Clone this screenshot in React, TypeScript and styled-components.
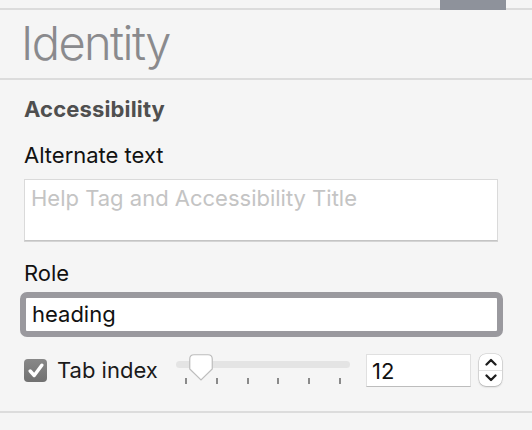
import React from "react";
import styled, { createGlobalStyle } from "styled-components";

const GlobalStyle = createGlobalStyle`
  html, body {
    margin: 0;
    padding: 0;
    background: #f5f5f5;
    font-family: Inter, "Noto Sans", "Liberation Sans", sans-serif;
  }
`;

const Panel = styled.div`
  width: 532px;
  height: 430px;
  background: #f5f5f5;
  overflow: hidden;
`;

const TopStrip = styled.div`
  height: 8px;
  display: flex;
  justify-content: flex-end;
  padding-right: 26px;
  border-bottom: 2px solid #dcdcdc;
`;

const ActiveTab = styled.div`
  width: 66px;
  height: 10px;
  background: #8e929b;
`;

const Header = styled.div`
  height: 61px;
  padding: 5px 0 2px 21px;
  border-bottom: 2px solid #dcdcdc;
`;

const Title = styled.h1`
  margin: 0;
  font-size: 47px;
  line-height: 56px;
  font-weight: 300;
  letter-spacing: -1.6px;
  color: #8a8a8d;
`;

const Section = styled.div`
  padding: 16px 34px 0 24px;
  display: flex;
  flex-direction: column;
`;

const SectionTitle = styled.div`
  font-size: 22px;
  line-height: 26px;
  font-weight: 700;
  letter-spacing: 0.15px;
  color: #4f4f4f;
`;

const Label = styled.div<{ $top: number }>`
  margin-top: ${(p) => p.$top}px;
  font-size: 22px;
  line-height: 26px;
  color: #111;
`;

const TextArea = styled.div`
  margin-top: 11px;
  height: 55px;
  padding: 5px 6px 0;
  background: #fff;
  border: 1px solid #dadada;
  border-bottom-color: #c4c4c4;
  box-shadow: 0 1px 0 #d4d4d4;
  font-size: 22px;
  line-height: 26px;
  color: #c4c4c4;
`;

const FocusedField = styled.div`
  margin: 6px -5px 0 -4px;
  height: 31px;
  padding: 2px 6px 0;
  background: #fff;
  border: 6px solid #9a999e;
  border-radius: 7px;
  font-size: 22px;
  line-height: 29px;
  color: #111;
`;

const ControlRow = styled.div`
  margin-top: 16px;
  padding-left: 24px;
  height: 34px;
  display: flex;
  align-items: center;
`;

const CheckLabel = styled.label`
  width: 152px;
  display: flex;
  align-items: center;
  gap: 10px;
  font-size: 22px;
  line-height: 26px;
  color: #1a1a1a;
`;

const CheckBox = styled.span`
  width: 23px;
  height: 23px;
  border-radius: 4px;
  background: linear-gradient(#888, #717171);
  display: flex;
  align-items: center;
  justify-content: center;
`;

const Slider = styled.div`
  position: relative;
  width: 174px;
  height: 32px;
`;

const Track = styled.div`
  position: absolute;
  left: 0;
  right: 0;
  top: 7px;
  height: 7px;
  border-radius: 4px;
  background: #e4e4e4;
`;

const Thumb = styled.svg`
  position: absolute;
  top: 0;
`;

const Ticks = styled.div`
  position: absolute;
  left: 9px;
  right: 9px;
  top: 24px;
  display: flex;
  justify-content: space-between;
`;

const Tick = styled.span`
  width: 2px;
  height: 6px;
  background: #8a8a8a;
`;

const NumberField = styled.div`
  margin-left: 16px;
  width: 98px;
  height: 31px;
  padding-left: 5px;
  background: #fff;
  border: 1px solid #e0e0e0;
  border-bottom-color: #bdbdbd;
  font-size: 22px;
  line-height: 32px;
  color: #111;
`;

const Stepper = styled.div`
  margin-left: 8px;
  width: 23px;
  height: 32px;
  border-radius: 7px;
  background: #fff;
  box-shadow: 0 0 0 0.5px rgba(0, 0, 0, 0.18), 0 1px 2px rgba(0, 0, 0, 0.2);
  display: flex;
  flex-direction: column;
`;

const StepHalf = styled.div<{ $top?: boolean }>`
  flex: 1;
  display: flex;
  align-items: center;
  justify-content: center;
  border-bottom: ${(p) => (p.$top ? "1px solid #e2e2e2" : "none")};
`;

const BottomRule = styled.div`
  margin-top: 24px;
  height: 2px;
  background: #dcdcdc;
`;

const sliderValue = 0.1;

function Chevron({ up }: { up?: boolean }) {
  return (
    <svg width="12" height="8" viewBox="0 0 12 8">
      <path
        d={up ? "M1.5 6.5 L6 2 L10.5 6.5" : "M1.5 1.5 L6 6 L10.5 1.5"}
        fill="none"
        stroke="#1e1e1e"
        strokeWidth="2.3"
        strokeLinecap="round"
        strokeLinejoin="round"
      />
    </svg>
  );
}

export default function App() {
  const ticks = [0, 1, 2, 3, 4, 5];
  return (
    <Panel>
      <GlobalStyle />
      <TopStrip>
        <ActiveTab />
      </TopStrip>
      <Header>
        <Title>Identity</Title>
      </Header>
      <Section>
        <SectionTitle>Accessibility</SectionTitle>
        <Label $top={20}>Alternate text</Label>
        <TextArea>Help Tag and Accessibility Title</TextArea>
        <Label $top={19}>Role</Label>
        <FocusedField>heading</FocusedField>
      </Section>
      <ControlRow>
        <CheckLabel>
          <CheckBox>
            <svg width="16" height="15" viewBox="0 0 16 15">
              <path
                d="M2.2 8 L6.2 12.5 L13.8 2.2"
                fill="none"
                stroke="#fff"
                strokeWidth="3.4"
                strokeLinecap="round"
                strokeLinejoin="round"
              />
            </svg>
          </CheckBox>
          Tab index
        </CheckLabel>
        <Slider>
          <Track />
          <Ticks>
            {ticks.map((t) => (
              <Tick key={t} />
            ))}
          </Ticks>
          <Thumb
            width="24"
            height="27"
            viewBox="0 0 24 27"
            style={{ left: 9 + sliderValue * 156 - 12 }}
          >
            <path
              d="M5 0.75 H19 Q23.25 0.75 23.25 5 V15 L12 26 L0.75 15 V5 Q0.75 0.75 5 0.75 Z"
              fill="#fff"
              stroke="#bdbdbd"
              strokeWidth="1.2"
            />
          </Thumb>
        </Slider>
        <NumberField>12</NumberField>
        <Stepper>
          <StepHalf $top>
            <Chevron up />
          </StepHalf>
          <StepHalf>
            <Chevron />
          </StepHalf>
        </Stepper>
      </ControlRow>
      <BottomRule />
    </Panel>
  );
}
